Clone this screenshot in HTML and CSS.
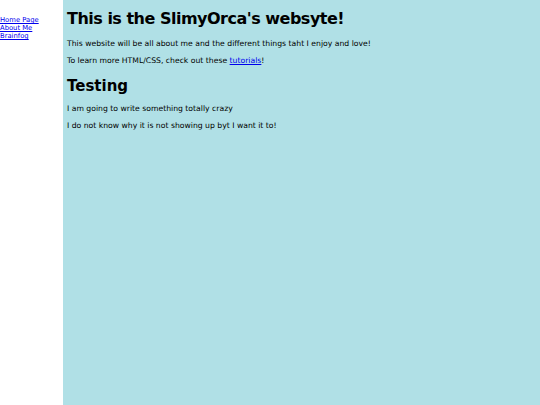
FILE: index.html
```html
<!DOCTYPE html>
<html>
<head>
<meta charset="utf-8">
<link rel="stylesheet" href="styles.css">
</head>
<body>
<div class="layout">
  <nav class="nav">
    <a href="#">Home Page</a>
    <a href="#">About Me</a>
    <a href="#">Brainfog</a>
  </nav>
  <main class="main">
    <h1 class="title">This is the SlimyOrca's websyte!</h1>
    <p class="text">This website will be all about me and the different things taht I enjoy and love!</p>
    <p class="text">To learn more HTML/CSS, check out these <a href="#">tutorials</a>!</p>
    <h2 class="subtitle">Testing</h2>
    <p class="text">I am going to write something totally crazy</p>
    <p class="text">I do not know why it is not showing up byt I want it to!</p>
  </main>
</div>
</body>
</html>
```
FILE: styles.css
```css
html, body {
  margin: 0;
  padding: 0;
  height: 100%;
}
body {
  font-family: "DejaVu Sans", Verdana, sans-serif;
  background: #ffffff;
  color: #000;
}
.layout {
  display: flex;
  min-height: 100%;
}
.nav {
  width: 63px;
  flex: none;
  display: flex;
  flex-direction: column;
  padding-top: 16px;
  font-size: 6.8px;
  line-height: 8px;
}
.nav a {
  color: #0000ee;
}
.main {
  flex: 1;
  background: #b0e0e6;
  padding: 0 4px;
}
.title {
  font-size: 16px;
  letter-spacing: -0.5px;
  line-height: 19px;
  margin: 9px 0 11px;
}
.subtitle {
  font-size: 15px;
  line-height: 18px;
  margin: 12px 0 9px;
}
.text {
  font-size: 7.7px;
  line-height: 9px;
  margin: 8px 0;
}
.text a {
  color: #0000ee;
}
```
